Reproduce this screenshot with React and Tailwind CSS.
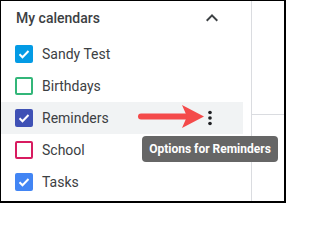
import React from "react";

const calendars = [
  { name: "Sandy Test", color: "#039be5", checked: true },
  { name: "Birthdays", color: "#33b679", checked: false },
  { name: "Reminders", color: "#3f51b5", checked: true, active: true },
  { name: "School", color: "#d81b60", checked: false },
  { name: "Tasks", color: "#4285f4", checked: true },
];

function Checkbox({ color, checked }) {
  if (!checked) {
    return (
      <span
        className="w-[18px] h-[18px] rounded-[2px] border-2 shrink-0"
        style={{ borderColor: color }}
      />
    );
  }
  return (
    <span
      className="w-[18px] h-[18px] rounded-[2px] shrink-0 flex items-center justify-center"
      style={{ backgroundColor: color }}
    >
      <svg width="18" height="18" viewBox="0 0 18 18" fill="none">
        <path d="M4.5 9.2l3 3 6-6.2" stroke="white" strokeWidth="2" />
      </svg>
    </span>
  );
}

function RedArrow() {
  return (
    <svg
      className="absolute left-[135px] top-0"
      width="70"
      height="30"
      viewBox="0 0 70 30"
    >
      <line x1="5" y1="14.5" x2="50" y2="14.5" stroke="#f44a4a" strokeWidth="6" strokeLinecap="round" />
      <polygon points="46,3 68,14.5 46,26 51,14.5" fill="#f44a4a" />
    </svg>
  );
}

export default function App() {
  return (
    <div
      className="relative w-[286px] h-[203px] bg-white border-black border-l border-t border-r-2 border-b-2 flex text-[#3c4043]"
      style={{ fontFamily: "Roboto, 'Liberation Sans', sans-serif" }}
    >
      {/* Sidebar */}
      <div className="w-[250px] shrink-0">
        <div className="h-[37px] pb-[3px] pl-[15px] pr-[27px] flex items-center justify-between">
          <span className="text-[14px] font-medium">My calendars</span>
          <svg width="24" height="24" viewBox="0 0 24 24" fill="#3c4043">
            <path d="M12 8l-6 6 1.41 1.41L12 10.83l4.59 4.58L18 14z" />
          </svg>
        </div>
        {calendars.map((c) => (
          <div
            key={c.name}
            className={`relative h-[32px] mr-[8px] pl-[14px] flex items-center gap-[9px] ${
              c.active ? "bg-[#f1f3f4]" : ""
            }`}
          >
            <Checkbox color={c.color} checked={c.checked} />
            <span className="text-[14px]">{c.name}</span>
            {c.active && (
              <>
                <RedArrow />
                <svg className="ml-auto mr-[22px]" width="22" height="22" viewBox="0 0 24 24" fill="#202124">
                  <circle cx="12" cy="6" r="2" />
                  <circle cx="12" cy="12" r="2" />
                  <circle cx="12" cy="18" r="2" />
                </svg>
              </>
            )}
          </div>
        ))}
      </div>

      {/* Main grid */}
      <div className="flex-1 border-l border-[#dadce0]">
        <div className="h-[114px] border-b border-[#dadce0]" />
      </div>

      {/* Tooltip */}
      <div className="absolute left-[141px] top-[135px] w-[136px] h-[26px] rounded-[4px] bg-[#666666] flex items-center justify-center">
        <span className="text-white text-[12px] font-bold">Options for Reminders</span>
      </div>
    </div>
  );
}
